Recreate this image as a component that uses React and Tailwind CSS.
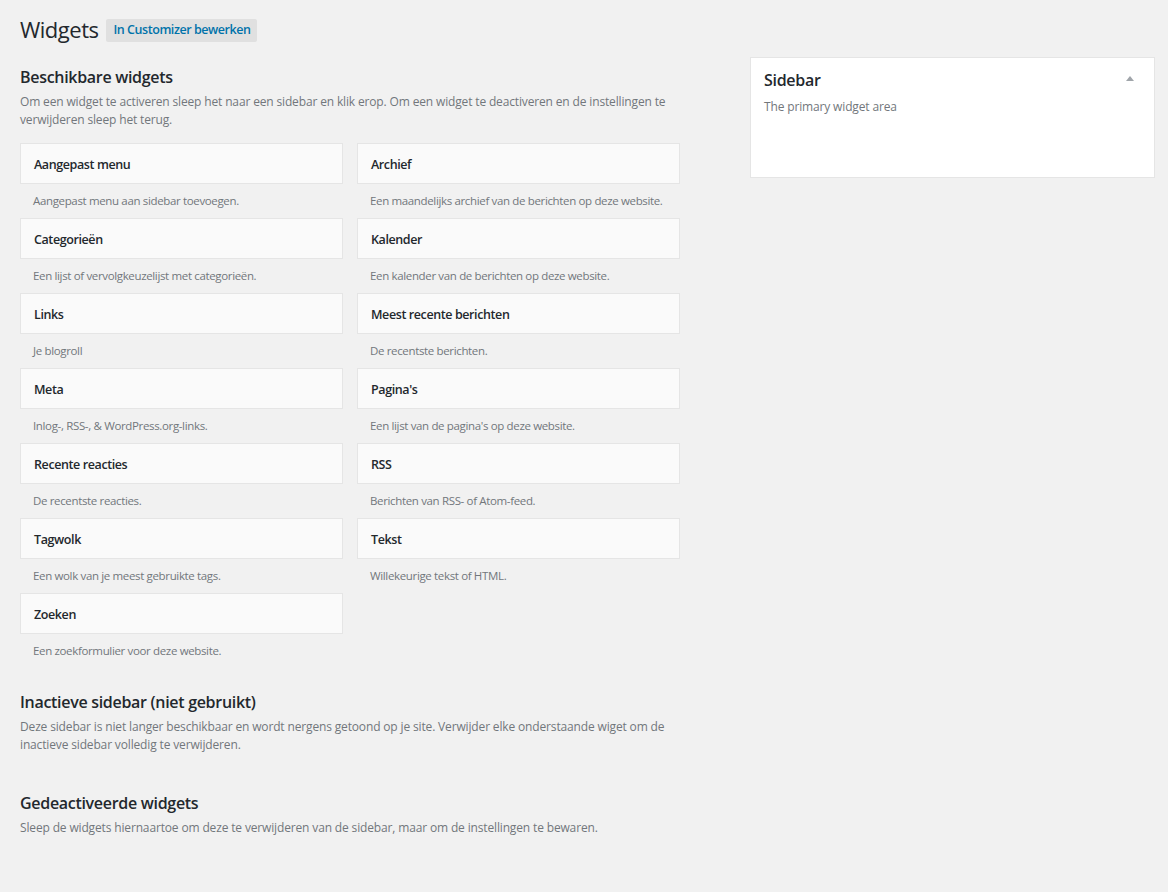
import React from 'react';

const WIDGETS = [
  ['Aangepast menu', 'Aangepast menu aan sidebar toevoegen.'],
  ['Archief', 'Een maandelijks archief van de berichten op deze website.'],
  ['Categorieën', 'Een lijst of vervolgkeuzelijst met categorieën.'],
  ['Kalender', 'Een kalender van de berichten op deze website.'],
  ['Links', 'Je blogroll'],
  ['Meest recente berichten', 'De recentste berichten.'],
  ['Meta', 'Inlog-, RSS-, & WordPress.org-links.'],
  ["Pagina's", "Een lijst van de pagina's op deze website."],
  ['Recente reacties', 'De recentste reacties.'],
  ['RSS', 'Berichten van RSS- of Atom-feed.'],
  ['Tagwolk', 'Een wolk van je meest gebruikte tags.'],
  ['Tekst', 'Willekeurige tekst of HTML.'],
  ['Zoeken', 'Een zoekformulier voor deze website.'],
];

function Widget({ title, desc }) {
  return (
    <div>
      <div className="h-[41px] flex items-center px-[13px] pt-[4px] bg-[#fafafa] border border-[#e5e5e5] text-[12.5px] tracking-[-0.4px] font-semibold text-[#23282d]">
        {title}
      </div>
      <p className="pt-[8px] pb-[8px] px-[13px] text-[11.5px] tracking-[-0.35px] leading-[18px] text-[#72777c]">{desc}</p>
    </div>
  );
}

export default function App() {
  return (
    <div
      className="min-h-[892px] bg-[#f1f1f1] text-[#444]"
      style={{ fontFamily: '"Open Sans", "Noto Sans", sans-serif' }}
    >
      <div className="pl-[20px] pr-[13px] pt-[16px]">
        {/* Page title */}
        <div className="flex items-center gap-[8px]">
          <h1 className="text-[22px] tracking-[-0.5px] leading-[26px] font-normal text-[#23282d]">Widgets</h1>
          <span className="h-[23px] px-[7px] flex items-center bg-[#e0e0e0] rounded-[2px] text-[12.5px] tracking-[-0.45px] font-semibold text-[#0073aa] mt-[2px]">
            In Customizer bewerken
          </span>
        </div>

        <div className="flex justify-between mt-[14px]">
          {/* Left column */}
          <div className="w-[660px]">
            <h2 className="mt-[10px] text-[16px] tracking-[-0.3px] leading-[22px] font-semibold text-[#23282d]">Beschikbare widgets</h2>
            <p className="mt-[5px] text-[12px] tracking-[-0.15px] leading-[18px] text-[#72777c]">
              Om een widget te activeren sleep het naar een sidebar en klik erop. Om een widget te deactiveren en de instellingen te verwijderen sleep het terug.
            </p>
            <div className="grid grid-cols-2 gap-x-[14px] mt-[14px] w-[660px]">
              {WIDGETS.map(([t, d]) => (
                <Widget key={t} title={t} desc={d} />
              ))}
            </div>

            <h2 className="mt-[23px] text-[16px] tracking-[-0.3px] leading-[22px] font-semibold text-[#23282d]">Inactieve sidebar (niet gebruikt)</h2>
            <p className="mt-[5px] text-[12px] tracking-[-0.15px] leading-[18px] text-[#72777c]">
              Deze sidebar is niet langer beschikbaar en wordt nergens getoond op je site. Verwijder elke onderstaande wiget om de inactieve sidebar volledig te verwijderen.
            </p>

            <h2 className="mt-[38px] text-[16px] tracking-[-0.3px] leading-[22px] font-semibold text-[#23282d]">Gedeactiveerde widgets</h2>
            <p className="mt-[5px] text-[12px] tracking-[-0.15px] leading-[18px] text-[#72777c]">
              Sleep de widgets hiernaartoe om deze te verwijderen van de sidebar, maar om de instellingen te bewaren.
            </p>
          </div>

          {/* Right column */}
          <div className="w-[405px] self-start mt-[1px]">
            <div className="h-[121px] bg-white border border-[#e5e5e5] pl-[13px] pr-[20px] pt-[11px]">
              <div className="flex items-center justify-between h-[22px]">
                <h2 className="text-[16px] tracking-[-0.3px] leading-[22px] font-semibold text-[#23282d]">Sidebar</h2>
                <svg width="8" height="5" viewBox="0 0 8 5" className="mb-[4px]">
                  <polygon points="4,0 8,5 0,5" fill="#a0a5aa" />
                </svg>
              </div>
              <p className="mt-[7px] text-[12px] tracking-[-0.15px] leading-[18px] text-[#72777c]">The primary widget area</p>
            </div>
          </div>
        </div>
      </div>
    </div>
  );
}
